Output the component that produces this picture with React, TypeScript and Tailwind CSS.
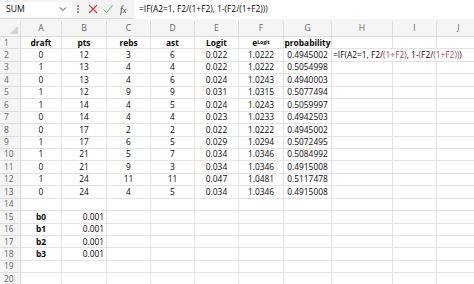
import React from "react";

const cols = "grid-cols-[21px_41px_45px_44px_44px_44px_45px_48px_61px_44px_44px]";
const letters = ["A", "B", "C", "D", "E", "F", "G", "H", "I", "J"];

const data: string[][] = [
  ["0", "12", "3", "6", "0.022", "1.0222", "0.4945002"],
  ["1", "13", "4", "4", "0.022", "1.0222", "0.5054998"],
  ["0", "13", "4", "6", "0.024", "1.0243", "0.4940003"],
  ["1", "12", "9", "9", "0.031", "1.0315", "0.5077494"],
  ["1", "14", "4", "5", "0.024", "1.0243", "0.5059997"],
  ["0", "14", "4", "4", "0.023", "1.0233", "0.4942503"],
  ["0", "17", "2", "2", "0.022", "1.0222", "0.4945002"],
  ["1", "17", "6", "5", "0.029", "1.0294", "0.5072495"],
  ["1", "21", "5", "7", "0.034", "1.0346", "0.5084992"],
  ["0", "21", "9", "3", "0.034", "1.0346", "0.4915008"],
  ["1", "24", "11", "11", "0.047", "1.0481", "0.5117478"],
  ["0", "24", "4", "5", "0.034", "1.0346", "0.4915008"],
];

const cell = "border-r border-b border-[#e3e3e3] flex items-center justify-center leading-none";
const rowHdr = "border-r border-b border-[#dcdcdc] bg-[#f5f5f5] text-[#666] flex items-center pl-[4px] leading-none";

function Paren({ children }: { children: React.ReactNode }) {
  return <span className="text-[#a84a5c]">{children}</span>;
}

function Formula() {
  return (
    <>
      =IF(A2=1, F2/<Paren>(1+F2)</Paren>, 1-<Paren>(</Paren>F2/<Paren>(1+F2))</Paren>)
    </>
  );
}

function Empty({ n }: { n: number }) {
  return (
    <>
      {Array.from({ length: n }).map((_, i) => (
        <div key={i} className={cell} />
      ))}
    </>
  );
}

export default function App() {
  return (
    <div className="w-[474px] h-[284px] overflow-hidden bg-white text-[#0a0a0a] text-[8.4px] [font-family:'Open_Sans',sans-serif]">
      {/* formula bar */}
      <div className="h-[19px] bg-[#f3f3f3] flex items-center border-b border-[#dedede]">
        <div className="w-[72px] h-[15px] bg-white flex items-center pl-[6px] pr-[4px] text-[8.6px]">
          <span className="flex-1">SUM</span>
          <svg width="8" height="6" viewBox="0 0 8 6" className="mr-[1px]">
            <path d="M1 1.5 L4 4.5 L7 1.5" fill="none" stroke="#444" strokeWidth="1" />
          </svg>
        </div>
        <div className="w-[12px] flex flex-col items-center gap-[1.5px]">
          <span className="w-[1.5px] h-[1.5px] bg-[#777] rounded-full" />
          <span className="w-[1.5px] h-[1.5px] bg-[#777] rounded-full" />
          <span className="w-[1.5px] h-[1.5px] bg-[#777] rounded-full" />
        </div>
        <svg width="12" height="12" viewBox="0 0 12 12" className="ml-[3px]">
          <path d="M2 2 L10 10 M10 2 L2 10" stroke="#d9363e" strokeWidth="1.1" />
        </svg>
        <svg width="12" height="12" viewBox="0 0 12 12" className="ml-[3px]">
          <path d="M1.5 6.5 L4.5 9.5 L10.5 2.5" fill="none" stroke="#5fae5f" strokeWidth="1" />
        </svg>
        <span className="ml-[6px] w-[10px] italic text-[10px] [font-family:'Liberation_Serif',serif] text-[#333]">
          f<span className="text-[8px]">x</span>
        </span>
        <div className="ml-[4px] flex-1 h-[19px] bg-white flex items-center pl-[5px] whitespace-nowrap">
          =IF(A2=1, F2/(1+F2), 1-(F2/(1+F2)))
        </div>
      </div>
      <div className="h-[2px] bg-[#f3f3f3]" />

      {/* sheet */}
      <div className={`grid ${cols} grid-rows-[16px] auto-rows-[12.44px]`}>
        {/* column header */}
        <div className="bg-[#f5f5f5] border-r border-b border-[#dcdcdc] relative">
          <svg width="8" height="8" viewBox="0 0 8 8" className="absolute right-[2px] bottom-[2px]">
            <path d="M8 0 L8 8 L0 8 Z" fill="#d4d4d4" />
          </svg>
        </div>
        {letters.map((l) => (
          <div key={l} className="bg-[#f5f5f5] border-r border-b border-[#dcdcdc] text-[#666] flex items-center justify-center leading-none text-[8.6px]">
            {l}
          </div>
        ))}

        {/* row 1 */}
        <div className={rowHdr}>1</div>
        {["draft", "pts", "rebs", "ast", "Logit"].map((h) => (
          <div key={h} className={`${cell} font-bold`}>{h}</div>
        ))}
        <div className={`${cell} font-bold`}>
          e<sup className="text-[5px] relative -top-[1px]">Logit</sup>
        </div>
        <div className={`${cell} font-bold`}>probability</div>
        <Empty n={3} />

        {/* rows 2-13 */}
        {data.map((r, i) => (
          <React.Fragment key={i}>
            <div className={rowHdr}>{i + 2}</div>
            {r.map((v, j) => (
              <div key={j} className={cell}>{v}</div>
            ))}
            {i === 0 ? (
              <div className="col-span-3 border-b border-[#e3e3e3] flex items-center pl-[1px] whitespace-nowrap overflow-visible leading-none">
                <Formula />
              </div>
            ) : (
              <Empty n={3} />
            )}
          </React.Fragment>
        ))}

        {/* row 14 */}
        <div className={rowHdr}>14</div>
        <Empty n={10} />

        {/* rows 15-18 */}
        {["b0", "b1", "b2", "b3"].map((b, i) => (
          <React.Fragment key={b}>
            <div className={rowHdr}>{15 + i}</div>
            <div className={`${cell} font-bold`}>{b}</div>
            <div className={`${cell} !justify-end pr-[2px]`}>0.001</div>
            <Empty n={8} />
          </React.Fragment>
        ))}

        {/* rows 19-20 */}
        {[19, 20].map((n) => (
          <React.Fragment key={n}>
            <div className={rowHdr}>{n}</div>
            <Empty n={10} />
          </React.Fragment>
        ))}
      </div>
    </div>
  );
}
